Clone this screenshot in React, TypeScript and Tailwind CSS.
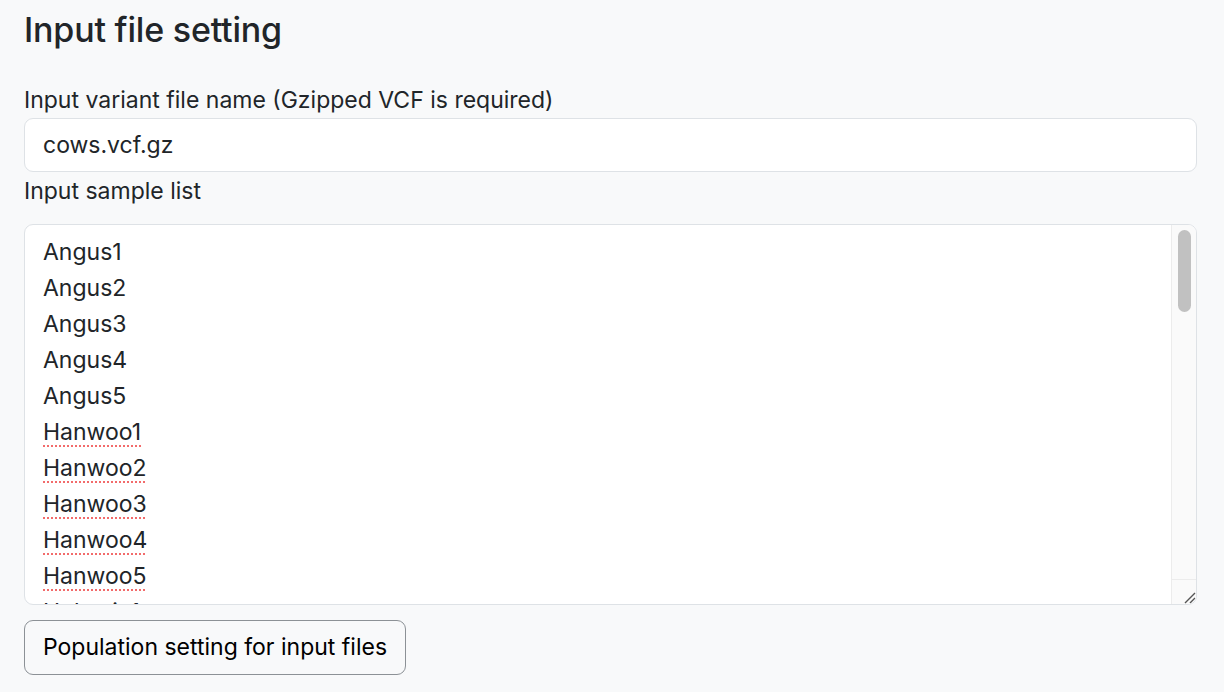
import React from 'react';

const samples = [
  'Angus1',
  'Angus2',
  'Angus3',
  'Angus4',
  'Angus5',
  'Hanwoo1',
  'Hanwoo2',
  'Hanwoo3',
  'Hanwoo4',
  'Hanwoo5',
  'Holstein1',
];

// words the spell checker flags in the reference
const flagged = (s: string) => s.startsWith('Hanwoo') || s.startsWith('Holstein');

export default function App() {
  return (
    <div
      className="min-h-screen bg-[#f8f9fa] text-[#212529] pl-6 pr-[27px] pt-[5px]"
      style={{ fontFamily: 'Inter, "Noto Sans", sans-serif' }}
    >
      <h3 className="text-[34px] font-medium leading-[50px] tracking-[-0.2px] mb-[27px]">Input file setting</h3>

      <label className="block text-[23px] leading-[36px]">Input variant file name (Gzipped VCF is required)</label>
      <div className="h-[54px] bg-white border border-[#dee2e6] rounded-[9px] px-[18px] flex items-center text-[23px]">
        cows.vcf.gz
      </div>

      <label className="block text-[23px] leading-[36px] mt-px mb-[15px]">Input sample list</label>
      <div className="h-[381px] bg-white border border-[#dee2e6] rounded-[9px] flex overflow-hidden">
        <div className="flex-1 pl-[18px] pt-[9px] text-[23px] leading-[36px] overflow-hidden">
          {samples.map((s) => (
            <div key={s}>
              <span
                className={
                  flagged(s)
                    ? 'underline decoration-dotted decoration-[#f26b6b] decoration-2 underline-offset-[5px]'
                    : ''
                }
              >
                {s}
              </span>
            </div>
          ))}
        </div>
        {/* scrollbar */}
        <div className="w-[25px] bg-[#fafafa] border-l border-[#ececec] flex flex-col">
          <div className="flex-1 pt-[5px] flex justify-center">
            <div className="w-[13px] h-[82px] rounded-full bg-[#c1c1c1]" />
          </div>
          <div className="h-[25px] border-t border-[#ececec] flex items-end justify-end">
            <svg width="14" height="14" viewBox="0 0 14 14">
              <path d="M3 13 L13 3 M8 13 L13 8" stroke="#555" strokeWidth="1.4" fill="none" />
            </svg>
          </div>
        </div>
      </div>

      <button className="mt-[15px] h-[55px] px-[18px] border border-[#8c9196] rounded-[9px] text-[23px] text-black bg-transparent">
        Population setting for input files
      </button>
    </div>
  );
}
